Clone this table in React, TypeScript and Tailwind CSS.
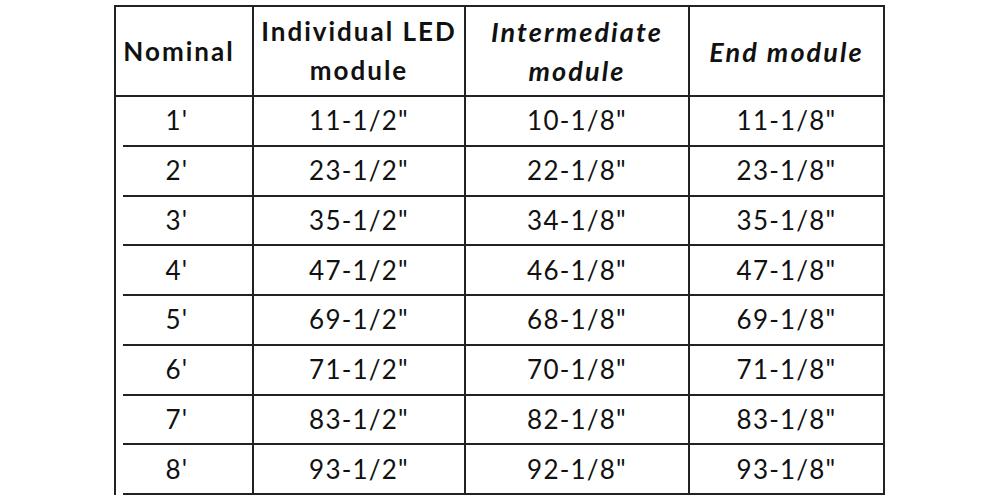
import React from "react";

const rows = [
  ["1'", '11-1/2"', '10-1/8"', '11-1/8"'],
  ["2'", '23-1/2"', '22-1/8"', '23-1/8"'],
  ["3'", '35-1/2"', '34-1/8"', '35-1/8"'],
  ["4'", '47-1/2"', '46-1/8"', '47-1/8"'],
  ["5'", '69-1/2"', '68-1/8"', '69-1/8"'],
  ["6'", '71-1/2"', '70-1/8"', '71-1/8"'],
  ["7'", '83-1/2"', '82-1/8"', '83-1/8"'],
  ["8'", '93-1/2"', '92-1/8"', '93-1/8"'],
];

export default function App() {
  return (
    <div
      className="w-[1000px] h-[500px] bg-white overflow-hidden text-[#111]"
      style={{ fontFamily: "Lato, 'Open Sans', sans-serif" }}
    >
      <div className="ml-[114px] mt-[5px] w-[771px] border-l-2 border-r-2 border-t-2 border-[#222]">
        <div className="grid grid-cols-[138px_212px_224px_193px] h-[90px] border-b-2 border-[#222] font-bold text-[26px] leading-[39px]">
          <div className="border-r-2 border-[#222] flex items-center justify-center text-center pr-[10px] tracking-[2px]">
            Nominal
          </div>
          <div className="border-r-2 border-[#222] flex items-center justify-center text-center tracking-[2px]">
            <span>
              Individual LED
              <br />
              module
            </span>
          </div>
          <div className="border-r-2 border-[#222] flex items-center justify-center text-center italic text-[27px] tracking-[2.1px]">
            <span>
              Intermediate
              <br />
              module
            </span>
          </div>
          <div className="flex items-center justify-center text-center italic text-[27px] tracking-[2.1px]">
            End module
          </div>
        </div>
        {rows.map((r, i) => (
          <div
            key={i}
            className="grid grid-cols-[138px_212px_224px_193px] h-[49.75px] text-[26px] tracking-[1.2px]"
          >
            <div className="border-r-2 border-[#222] flex flex-col">
              <div className="flex-1 flex items-center justify-center pr-[14px]">{r[0]}</div>
              <div className="ml-[7px] h-[2px] bg-[#222]" />
            </div>
            <div className="border-r-2 border-b-2 border-[#222] flex items-center justify-center">
              {r[1]}
            </div>
            <div className="border-r-2 border-b-2 border-[#222] flex items-center justify-center">
              {r[2]}
            </div>
            <div className="border-b-2 border-[#222] flex items-center justify-center">
              {r[3]}
            </div>
          </div>
        ))}
      </div>
    </div>
  );
}
